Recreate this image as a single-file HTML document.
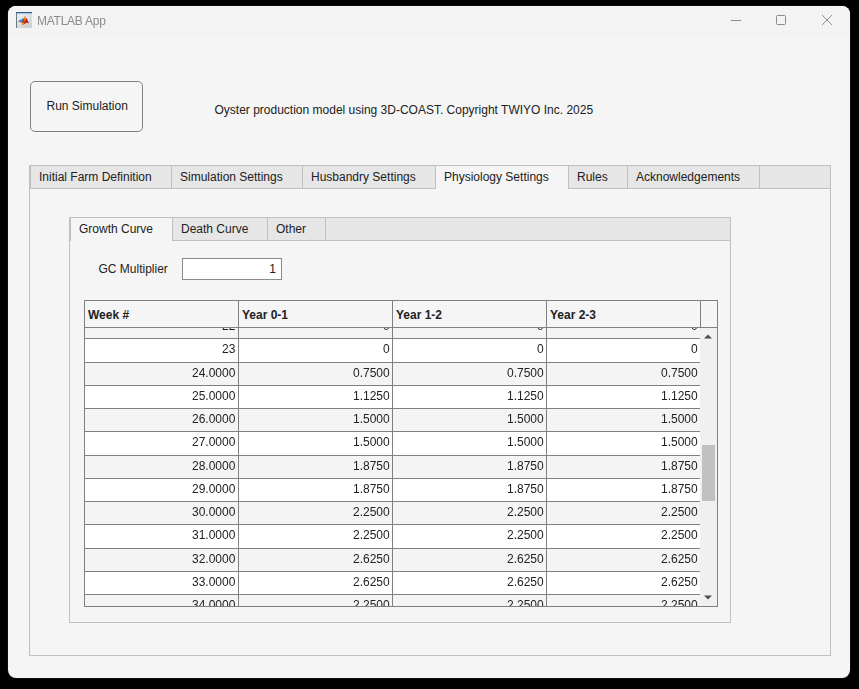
<!DOCTYPE html>
<html><head><meta charset="utf-8"><style>
html,body{margin:0;padding:0;}
body{width:859px;height:689px;background:#000;position:relative;overflow:hidden;font-family:"Liberation Sans", sans-serif;}
div{box-sizing:content-box;}
</style></head><body>
<div style="position:absolute;left:8px;top:6px;width:842px;height:672px;background:#f5f5f5;border-radius:8px;overflow:hidden;box-shadow:0 0 0 1px #0e0e0e;"><div style="position:absolute;left:0px;top:0px;width:842px;height:30px;background:#f3f3f3;"></div></div><svg width="17" height="17" viewBox="0 0 17 17" style="position:absolute;left:16px;top:12px">
<defs><linearGradient id="ig" x1="0" y1="0" x2="0.6" y2="1"><stop offset="0" stop-color="#f2f5f8"/><stop offset="1" stop-color="#cfd2d5"/></linearGradient></defs>
<rect x="0" y="0" width="16" height="16" fill="url(#ig)"/>
<rect x="0" y="0" width="16" height="1.3" fill="#2f5f90"/>
<rect x="0" y="1.3" width="16" height="0.8" fill="#a9c4de"/>
<rect x="0" y="0" width="0.9" height="16" fill="#5d6b78"/>
<path d="M2.2 9.4 L5.2 7.6 L7.6 6.4 L9.2 4.0 L10.8 7.2 L12.8 11.6 L11.2 10.4 L8.6 12.0 L6.6 13.0 L5.8 10.6 Z" fill="#c8321e"/>
<path d="M2.2 9.4 L5.2 7.6 L7.6 6.4 L6.4 9.6 L5.2 10.4 Z" fill="#3f8fd0"/>
<path d="M8.4 5.4 L9.2 4.0 L10.0 5.2 L9.6 8.6 L8.6 8.8 Z" fill="#f7c51e"/>
<path d="M5.8 10.6 L8.0 11.0 L8.4 12.4 L6.6 13.0 Z" fill="#f59a1b"/>
<path d="M9.6 6.0 L10.8 7.2 L12.8 11.6 L11.2 10.4 L9.8 9.0 Z" fill="#9e1b14"/>
</svg><div style="position:absolute;left:36.9px;top:14.14px;font-size:12px;font-weight:400;color:#8c8c8c;white-space:nowrap;line-height:normal;letter-spacing:-0.25px;will-change:transform;">MATLAB App</div><div style="position:absolute;left:731px;top:20px;width:10px;height:1px;background:#8c8c8c;"></div><div style="position:absolute;left:776px;top:15px;width:8px;height:8px;border:1px solid #8c8c8c;border-radius:1.5px;"></div><svg width="12" height="12" viewBox="0 0 12 12" style="position:absolute;left:821px;top:14px">
<path d="M1 1 L11 11 M11 1 L1 11" stroke="#8c8c8c" stroke-width="1" fill="none"/></svg><div style="position:absolute;left:30px;top:81px;width:111px;height:49px;border:1px solid #808080;border-radius:5px;background:#f5f5f5;"></div><div style="position:absolute;left:46.5px;top:99.14px;font-size:12px;font-weight:400;color:#212121;white-space:nowrap;line-height:normal;">Run Simulation</div><div style="position:absolute;left:214.5px;top:103.14px;font-size:12px;font-weight:400;color:#212121;white-space:nowrap;line-height:normal;">Oyster production model using 3D-COAST. Copyright TWIYO Inc. 2025</div><div style="position:absolute;left:29px;top:165px;width:800px;height:489px;border:1px solid #c0c0c0;background:#f5f5f5;"></div><div style="position:absolute;left:30px;top:166px;width:800px;height:22px;background:#e6e6e6;"></div><div style="position:absolute;left:30px;top:188px;width:800px;height:1px;background:#c0c0c0;"></div><div style="position:absolute;left:30px;top:166px;width:1px;height:22px;background:#c0c0c0;"></div><div style="position:absolute;left:171px;top:166px;width:1px;height:22px;background:#c0c0c0;"></div><div style="position:absolute;left:302px;top:166px;width:1px;height:22px;background:#c0c0c0;"></div><div style="position:absolute;left:435px;top:166px;width:1px;height:22px;background:#c0c0c0;"></div><div style="position:absolute;left:568px;top:166px;width:1px;height:22px;background:#c0c0c0;"></div><div style="position:absolute;left:627px;top:166px;width:1px;height:22px;background:#c0c0c0;"></div><div style="position:absolute;left:759px;top:166px;width:1px;height:22px;background:#c0c0c0;"></div><div style="position:absolute;left:436px;top:166px;width:132px;height:23px;background:#f5f5f5;"></div><div style="position:absolute;left:39px;top:170.14px;font-size:12px;font-weight:400;color:#212121;white-space:nowrap;line-height:normal;">Initial Farm Definition</div><div style="position:absolute;left:180px;top:170.14px;font-size:12px;font-weight:400;color:#212121;white-space:nowrap;line-height:normal;">Simulation Settings</div><div style="position:absolute;left:311px;top:170.14px;font-size:12px;font-weight:400;color:#212121;white-space:nowrap;line-height:normal;">Husbandry Settings</div><div style="position:absolute;left:444px;top:170.14px;font-size:12px;font-weight:400;color:#212121;white-space:nowrap;line-height:normal;">Physiology Settings</div><div style="position:absolute;left:577px;top:170.14px;font-size:12px;font-weight:400;color:#212121;white-space:nowrap;line-height:normal;">Rules</div><div style="position:absolute;left:636px;top:170.14px;font-size:12px;font-weight:400;color:#212121;white-space:nowrap;line-height:normal;">Acknowledgements</div><div style="position:absolute;left:69px;top:217px;width:660px;height:404px;border:1px solid #c0c0c0;background:#f5f5f5;"></div><div style="position:absolute;left:70px;top:218px;width:660px;height:22px;background:#e6e6e6;"></div><div style="position:absolute;left:70px;top:240px;width:660px;height:1px;background:#c0c0c0;"></div><div style="position:absolute;left:70px;top:218px;width:1px;height:22px;background:#c0c0c0;"></div><div style="position:absolute;left:172px;top:218px;width:1px;height:22px;background:#c0c0c0;"></div><div style="position:absolute;left:267px;top:218px;width:1px;height:22px;background:#c0c0c0;"></div><div style="position:absolute;left:325px;top:218px;width:1px;height:22px;background:#c0c0c0;"></div><div style="position:absolute;left:71px;top:218px;width:101px;height:23px;background:#f5f5f5;"></div><div style="position:absolute;left:79px;top:222.14px;font-size:12px;font-weight:400;color:#212121;white-space:nowrap;line-height:normal;">Growth Curve</div><div style="position:absolute;left:181px;top:222.14px;font-size:12px;font-weight:400;color:#212121;white-space:nowrap;line-height:normal;">Death Curve</div><div style="position:absolute;left:276px;top:222.14px;font-size:12px;font-weight:400;color:#212121;white-space:nowrap;line-height:normal;">Other</div><div style="position:absolute;left:98.5px;top:262.14px;font-size:12px;font-weight:400;color:#212121;white-space:nowrap;line-height:normal;">GC Multiplier</div><div style="position:absolute;left:182px;top:258px;width:98px;height:20px;border:1px solid #8a8a8a;background:#fff;"></div><div style="position:absolute;right:583px;top:262.14px;font-size:12px;font-weight:400;color:#212121;white-space:nowrap;line-height:normal;text-align:right;">1</div><div style="position:absolute;left:84px;top:300px;width:634px;height:307px;background:#808080;"></div><div style="position:absolute;left:85px;top:328px;width:615px;height:278px;overflow:hidden;"><div style="position:absolute;left:0px;top:-12px;width:615px;height:22px;background:#f4f4f4;"></div><div style="position:absolute;left:0px;top:10px;width:615px;height:1px;background:#808080;"></div><div style="position:absolute;right:464.5px;top:-8.86px;font-size:12px;color:#222222;white-space:nowrap;will-change:transform">22</div><div style="position:absolute;right:310.5px;top:-8.86px;font-size:12px;color:#222222;white-space:nowrap;will-change:transform">0</div><div style="position:absolute;right:156.5px;top:-8.86px;font-size:12px;color:#222222;white-space:nowrap;will-change:transform">0</div><div style="position:absolute;right:2.5px;top:-8.86px;font-size:12px;color:#222222;white-space:nowrap;will-change:transform">0</div><div style="position:absolute;left:0px;top:11px;width:615px;height:23px;background:#ffffff;"></div><div style="position:absolute;left:0px;top:34px;width:615px;height:1px;background:#808080;"></div><div style="position:absolute;right:464.5px;top:14.14px;font-size:12px;color:#222222;white-space:nowrap;will-change:transform">23</div><div style="position:absolute;right:310.5px;top:14.14px;font-size:12px;color:#222222;white-space:nowrap;will-change:transform">0</div><div style="position:absolute;right:156.5px;top:14.14px;font-size:12px;color:#222222;white-space:nowrap;will-change:transform">0</div><div style="position:absolute;right:2.5px;top:14.14px;font-size:12px;color:#222222;white-space:nowrap;will-change:transform">0</div><div style="position:absolute;left:0px;top:35px;width:615px;height:22px;background:#f4f4f4;"></div><div style="position:absolute;left:0px;top:57px;width:615px;height:1px;background:#808080;"></div><div style="position:absolute;right:464.5px;top:38.14px;font-size:12px;color:#222222;white-space:nowrap;will-change:transform">24.0000</div><div style="position:absolute;right:310.5px;top:38.14px;font-size:12px;color:#222222;white-space:nowrap;will-change:transform">0.7500</div><div style="position:absolute;right:156.5px;top:38.14px;font-size:12px;color:#222222;white-space:nowrap;will-change:transform">0.7500</div><div style="position:absolute;right:2.5px;top:38.14px;font-size:12px;color:#222222;white-space:nowrap;will-change:transform">0.7500</div><div style="position:absolute;left:0px;top:58px;width:615px;height:22px;background:#ffffff;"></div><div style="position:absolute;left:0px;top:80px;width:615px;height:1px;background:#808080;"></div><div style="position:absolute;right:464.5px;top:61.14px;font-size:12px;color:#222222;white-space:nowrap;will-change:transform">25.0000</div><div style="position:absolute;right:310.5px;top:61.14px;font-size:12px;color:#222222;white-space:nowrap;will-change:transform">1.1250</div><div style="position:absolute;right:156.5px;top:61.14px;font-size:12px;color:#222222;white-space:nowrap;will-change:transform">1.1250</div><div style="position:absolute;right:2.5px;top:61.14px;font-size:12px;color:#222222;white-space:nowrap;will-change:transform">1.1250</div><div style="position:absolute;left:0px;top:81px;width:615px;height:22px;background:#f4f4f4;"></div><div style="position:absolute;left:0px;top:103px;width:615px;height:1px;background:#808080;"></div><div style="position:absolute;right:464.5px;top:84.14px;font-size:12px;color:#222222;white-space:nowrap;will-change:transform">26.0000</div><div style="position:absolute;right:310.5px;top:84.14px;font-size:12px;color:#222222;white-space:nowrap;will-change:transform">1.5000</div><div style="position:absolute;right:156.5px;top:84.14px;font-size:12px;color:#222222;white-space:nowrap;will-change:transform">1.5000</div><div style="position:absolute;right:2.5px;top:84.14px;font-size:12px;color:#222222;white-space:nowrap;will-change:transform">1.5000</div><div style="position:absolute;left:0px;top:104px;width:615px;height:23px;background:#ffffff;"></div><div style="position:absolute;left:0px;top:127px;width:615px;height:1px;background:#808080;"></div><div style="position:absolute;right:464.5px;top:107.14px;font-size:12px;color:#222222;white-space:nowrap;will-change:transform">27.0000</div><div style="position:absolute;right:310.5px;top:107.14px;font-size:12px;color:#222222;white-space:nowrap;will-change:transform">1.5000</div><div style="position:absolute;right:156.5px;top:107.14px;font-size:12px;color:#222222;white-space:nowrap;will-change:transform">1.5000</div><div style="position:absolute;right:2.5px;top:107.14px;font-size:12px;color:#222222;white-space:nowrap;will-change:transform">1.5000</div><div style="position:absolute;left:0px;top:128px;width:615px;height:22px;background:#f4f4f4;"></div><div style="position:absolute;left:0px;top:150px;width:615px;height:1px;background:#808080;"></div><div style="position:absolute;right:464.5px;top:131.14px;font-size:12px;color:#222222;white-space:nowrap;will-change:transform">28.0000</div><div style="position:absolute;right:310.5px;top:131.14px;font-size:12px;color:#222222;white-space:nowrap;will-change:transform">1.8750</div><div style="position:absolute;right:156.5px;top:131.14px;font-size:12px;color:#222222;white-space:nowrap;will-change:transform">1.8750</div><div style="position:absolute;right:2.5px;top:131.14px;font-size:12px;color:#222222;white-space:nowrap;will-change:transform">1.8750</div><div style="position:absolute;left:0px;top:151px;width:615px;height:22px;background:#ffffff;"></div><div style="position:absolute;left:0px;top:173px;width:615px;height:1px;background:#808080;"></div><div style="position:absolute;right:464.5px;top:154.14px;font-size:12px;color:#222222;white-space:nowrap;will-change:transform">29.0000</div><div style="position:absolute;right:310.5px;top:154.14px;font-size:12px;color:#222222;white-space:nowrap;will-change:transform">1.8750</div><div style="position:absolute;right:156.5px;top:154.14px;font-size:12px;color:#222222;white-space:nowrap;will-change:transform">1.8750</div><div style="position:absolute;right:2.5px;top:154.14px;font-size:12px;color:#222222;white-space:nowrap;will-change:transform">1.8750</div><div style="position:absolute;left:0px;top:174px;width:615px;height:22px;background:#f4f4f4;"></div><div style="position:absolute;left:0px;top:196px;width:615px;height:1px;background:#808080;"></div><div style="position:absolute;right:464.5px;top:177.14px;font-size:12px;color:#222222;white-space:nowrap;will-change:transform">30.0000</div><div style="position:absolute;right:310.5px;top:177.14px;font-size:12px;color:#222222;white-space:nowrap;will-change:transform">2.2500</div><div style="position:absolute;right:156.5px;top:177.14px;font-size:12px;color:#222222;white-space:nowrap;will-change:transform">2.2500</div><div style="position:absolute;right:2.5px;top:177.14px;font-size:12px;color:#222222;white-space:nowrap;will-change:transform">2.2500</div><div style="position:absolute;left:0px;top:197px;width:615px;height:23px;background:#ffffff;"></div><div style="position:absolute;left:0px;top:220px;width:615px;height:1px;background:#808080;"></div><div style="position:absolute;right:464.5px;top:200.14px;font-size:12px;color:#222222;white-space:nowrap;will-change:transform">31.0000</div><div style="position:absolute;right:310.5px;top:200.14px;font-size:12px;color:#222222;white-space:nowrap;will-change:transform">2.2500</div><div style="position:absolute;right:156.5px;top:200.14px;font-size:12px;color:#222222;white-space:nowrap;will-change:transform">2.2500</div><div style="position:absolute;right:2.5px;top:200.14px;font-size:12px;color:#222222;white-space:nowrap;will-change:transform">2.2500</div><div style="position:absolute;left:0px;top:221px;width:615px;height:22px;background:#f4f4f4;"></div><div style="position:absolute;left:0px;top:243px;width:615px;height:1px;background:#808080;"></div><div style="position:absolute;right:464.5px;top:224.14px;font-size:12px;color:#222222;white-space:nowrap;will-change:transform">32.0000</div><div style="position:absolute;right:310.5px;top:224.14px;font-size:12px;color:#222222;white-space:nowrap;will-change:transform">2.6250</div><div style="position:absolute;right:156.5px;top:224.14px;font-size:12px;color:#222222;white-space:nowrap;will-change:transform">2.6250</div><div style="position:absolute;right:2.5px;top:224.14px;font-size:12px;color:#222222;white-space:nowrap;will-change:transform">2.6250</div><div style="position:absolute;left:0px;top:244px;width:615px;height:22px;background:#ffffff;"></div><div style="position:absolute;left:0px;top:266px;width:615px;height:1px;background:#808080;"></div><div style="position:absolute;right:464.5px;top:247.14px;font-size:12px;color:#222222;white-space:nowrap;will-change:transform">33.0000</div><div style="position:absolute;right:310.5px;top:247.14px;font-size:12px;color:#222222;white-space:nowrap;will-change:transform">2.6250</div><div style="position:absolute;right:156.5px;top:247.14px;font-size:12px;color:#222222;white-space:nowrap;will-change:transform">2.6250</div><div style="position:absolute;right:2.5px;top:247.14px;font-size:12px;color:#222222;white-space:nowrap;will-change:transform">2.6250</div><div style="position:absolute;left:0px;top:267px;width:615px;height:35px;background:#f4f4f4;"></div><div style="position:absolute;right:464.5px;top:270.14px;font-size:12px;color:#222222;white-space:nowrap;will-change:transform">34.0000</div><div style="position:absolute;right:310.5px;top:270.14px;font-size:12px;color:#222222;white-space:nowrap;will-change:transform">2.2500</div><div style="position:absolute;right:156.5px;top:270.14px;font-size:12px;color:#222222;white-space:nowrap;will-change:transform">2.2500</div><div style="position:absolute;right:2.5px;top:270.14px;font-size:12px;color:#222222;white-space:nowrap;will-change:transform">2.2500</div><div style="position:absolute;left:153px;top:0px;width:1px;height:278px;background:#808080;"></div><div style="position:absolute;left:307px;top:0px;width:1px;height:278px;background:#808080;"></div><div style="position:absolute;left:461px;top:0px;width:1px;height:278px;background:#808080;"></div></div><div style="position:absolute;left:85px;top:301px;width:615px;height:26px;background:#f5f5f5;"></div><div style="position:absolute;left:238px;top:301px;width:1px;height:26px;background:#808080;"></div><div style="position:absolute;left:392px;top:301px;width:1px;height:26px;background:#808080;"></div><div style="position:absolute;left:546px;top:301px;width:1px;height:26px;background:#808080;"></div><div style="position:absolute;left:701px;top:301px;width:16px;height:26px;background:#f5f5f5;"></div><div style="position:absolute;left:88px;top:308.14px;font-size:12px;font-weight:700;color:#212121;white-space:nowrap;line-height:normal;">Week #</div><div style="position:absolute;left:242px;top:308.14px;font-size:12px;font-weight:700;color:#212121;white-space:nowrap;line-height:normal;">Year 0-1</div><div style="position:absolute;left:396px;top:308.14px;font-size:12px;font-weight:700;color:#212121;white-space:nowrap;line-height:normal;">Year 1-2</div><div style="position:absolute;left:550px;top:308.14px;font-size:12px;font-weight:700;color:#212121;white-space:nowrap;line-height:normal;">Year 2-3</div><div style="position:absolute;left:700px;top:328px;width:17px;height:278px;background:#f0f0f0;"></div><div style="position:absolute;left:702px;top:445px;width:13px;height:56px;background:#c1c1c1;"></div><svg width="9" height="5" style="position:absolute;left:704px;top:334px"><path d="M0 4.6 L4 0.4 L8 4.6 Z" fill="#4d4d4d"/></svg><svg width="9" height="5" style="position:absolute;left:704px;top:594.6px"><path d="M0 0.4 L4 4.6 L8 0.4 Z" fill="#4d4d4d"/></svg>
</body></html>
